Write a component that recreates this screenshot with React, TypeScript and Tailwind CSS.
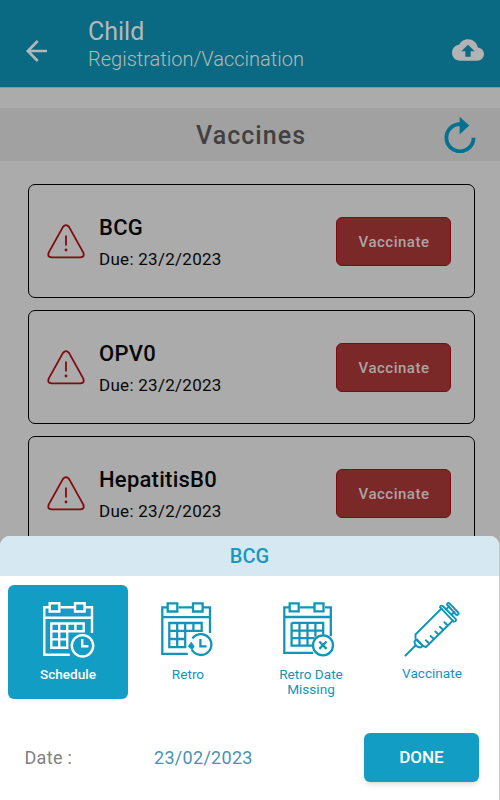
import type { ReactNode } from 'react';

const vaccines = [
  { name: 'BCG', due: '23/2/2023' },
  { name: 'OPV0', due: '23/2/2023' },
  { name: 'HepatitisB0', due: '23/2/2023' },
];

function WarningIcon() {
  return (
    <svg width="38" height="35" viewBox="0 0 38 35" fill="none" stroke="#82090e" strokeWidth="1.8" strokeLinecap="round">
      <path d="M16 2.9Q19 -.8 22 2.9L36.2 28.4Q38 33.2 33.5 33.3H4.5Q0 33.2 1.8 28.4Z" strokeLinejoin="round" />
      <path d="M19 11.5v10" strokeLinecap="butt" />
      <circle cx="19" cy="26" r="1.4" fill="#82090e" stroke="none" />
    </svg>
  );
}

function ScheduleIcon() {
  return (
    <svg width="52" height="56" viewBox="0 0 52 56" fill="none" stroke="currentColor" strokeWidth="2.4">
      <path d="M6 5.3H1.3v47.4h25.5M17.5 5.3H31M42 5.3h7V31M1.3 15.7H49" />
      <path d="M6.7 1.3h9.6v8.2H6.7zM32 1.3h9.6v8.2H32z" />
      <path d="M8.3 21.5h32.4v7.8H24.2v16.4H8.3zM8.3 29.3h16M8.3 37.4h16M16.2 21.5v24.2M24.2 21.5v8M32.4 21.5v8" />
      <circle cx="39.5" cy="43.8" r="10.7" />
      <path d="M39.2 37v7.3h6.2" />
    </svg>
  );
}

function RetroIcon() {
  return (
    <svg width="52" height="56" viewBox="0 0 52 56" fill="none" stroke="currentColor" strokeWidth="2.3">
      <path d="M6 5.3H1.3v46.6h25.5M17.5 5.3H31M42 5.3h7V31M1.3 15.2H49" />
      <path d="M6.7 1.3h9.6v8.2H6.7zM32 1.3h9.6v8.2H32z" />
      <path d="M8.3 21h32.4v7.8H24.2v16.4H8.3zM8.3 28.8h16M8.3 37h16M16.2 21v24.2M24.2 21v8M32.4 21v8" />
      <path d="M31.5 36.5A10.4 10.4 0 1 1 30.8 47.5" />
      <path d="M30.3 40.2l2.9 4.2-2 3.2-4-3.2z" fill="currentColor" strokeWidth=".8" />
      <path d="M39.4 37v7.3h6.2" />
    </svg>
  );
}

function MissingIcon() {
  return (
    <svg width="52" height="56" viewBox="0 0 52 56" fill="none" stroke="currentColor" strokeWidth="2.3">
      <path d="M6 5.3H1.3v45.6h29M16.7 5.3H31M42 5.3h5.8v29M1.3 15H48" />
      <path d="M6.7 1.3h9v8h-9zM31.5 1.3h9v8h-9z" />
      <path d="M8.6 20.8h31.6v12M30 43.6H8.6V20.8M8.6 28.6h31.6M8.6 36.2h23M16.5 20.8v22.8M24.5 20.8v22.8M32.4 20.8v14" />
      <circle cx="40" cy="43.3" r="10" />
      <path d="M36.3 39.5l7.2 7.4M43.5 39.5l-7.2 7.4" />
    </svg>
  );
}

function SyringeIcon() {
  return (
    <svg width="56" height="56" viewBox="0 0 56 56" fill="none" stroke="currentColor" strokeWidth="1.9" strokeLinejoin="round" strokeLinecap="round">
      <path d="M1.5 53.5L11.5 43.5" />
      <path d="M13 37.5l6 6.5-2.5 1.5-3.5-1-2-2.5-.6-2.8z" />
      <path d="M37.5 6.5L11.5 32.5v4.5l7.5 7 3 1L49 18.5" />
      <path d="M21.8 38.3l3.2 3M26.6 34l3.2 3M31.3 29.5l3.2 3M35.8 24.8l3.2 3M40.4 20.2l3.2 3" />
      <path d="M36 5.2q.3-2.3 2.8-1.2L52 17.3q.2 2.5-2.4 2.3z" />
      <path d="M43 2.5q.3-2.2 2.6-1.2l9 9.7q.2 2.2-2.3 1.9z" />
      <path d="M42 7.4l3.2-2.9M47.5 12.7l2.9-2.7" />
    </svg>
  );
}

function Option({ icon, label, className }: { icon: ReactNode; label: ReactNode; className: string }) {
  return (
    <button className={`flex h-[114px] flex-col items-center rounded-md pt-[17px] text-[13.6px] leading-[15px] ${className}`}>
      {icon}
      <span className="mt-[9px]">{label}</span>
    </button>
  );
}

export default function App() {
  return (
    <div className="relative h-[800px] w-[500px] overflow-hidden bg-[#ababab] font-[Roboto,sans-serif]">
      <header className="flex h-[88px] items-start border-b border-[#8f9496] bg-[#0b6a83] text-[#b3b8ba]">
        <svg className="mt-[40px] ml-[26px]" width="22" height="22" viewBox="0 0 22 22" fill="none" stroke="currentColor" strokeWidth="2.6">
          <path d="M21 11H2M11.7 1L1.8 11l9.9 10" />
        </svg>
        <div className="mt-[17px] ml-[40px] flex-1">
          <h1 className="text-[25px] leading-[29px]">Child</h1>
          <p className="text-[20px] leading-[26px] font-light">Registration/Vaccination</p>
        </div>
        <svg className="mt-[34px] mr-[16px]" width="32" height="32" viewBox="0 0 24 24" fill="#b3b3b3">
          <path d="M19.35 10.04C18.67 6.59 15.64 4 12 4 9.11 4 6.6 5.64 5.35 8.04 2.34 8.36 0 10.91 0 14c0 3.31 2.69 6 6 6h13c2.76 0 5-2.24 5-5 0-2.64-2.05-4.78-4.65-4.96zM14 13v4h-4v-4H7l5-5 5 5h-3z" />
        </svg>
      </header>

      <div className="mt-[20px] flex h-[53px] items-center bg-[#a1a1a1] pr-[24px] pl-[196px]">
        <h2 className="flex-1 pt-[3px] text-[25px] leading-[36px] font-medium tracking-[1.05px] text-[#414141]">Vaccines</h2>
        <svg width="33" height="37" viewBox="0 0 33 37" fill="none" stroke="#05718e" strokeWidth="3.8">
          <path d="M17 8.2A13.6 13.6 0 1 0 30.6 21.8" />
          <path d="M16.6 .8v17.6L26.2 9.6z" fill="#05718e" stroke="none" />
        </svg>
      </div>

      <main className="mt-[23px] flex flex-col gap-3 pr-[25px] pl-[28px]">
        {vaccines.map((v) => (
          <section key={v.name} className="flex h-[114px] items-center rounded-[7px] border border-black pr-[23px] pl-[18px]">
            <WarningIcon />
            <div className="ml-[14px] flex-1 pt-[4px] text-[#070707]">
              <h3 className="text-[22px] leading-[28px] font-medium tracking-[0.25px]">{v.name}</h3>
              <p className="mt-[4px] text-[17px] leading-[26px] tracking-[0.28px]">Due: {v.due}</p>
            </div>
            <button className="h-[49px] w-[115px] rounded-md border border-[#7d0b10] bg-[#7b2829] pt-[2px] pl-px text-[15px] font-medium tracking-[0.5px] text-[#aea3a3]">
              Vaccinate
            </button>
          </section>
        ))}
      </main>

      <div className="absolute inset-x-0 bottom-0 h-[264px] overflow-hidden rounded-t-[10px] border-r border-[#c9c9c9] bg-white">
        <h2 className="flex h-[40px] items-center justify-center bg-[#d6e9f3] text-[20px] font-medium text-[#149ac0]">BCG</h2>
        <div className="mt-[9px] flex pl-2 text-[#1394ba]">
          <Option icon={<span className="pl-px"><ScheduleIcon /></span>} label="Schedule" className="w-[120px] bg-[#129dc4] font-medium text-white" />
          <Option icon={<span className="pr-[3px]"><RetroIcon /></span>} label="Retro" className="w-[120px]" />
          <Option icon={<span className="pr-[4px]"><MissingIcon /></span>} label={<>Retro Date<br />Missing</>} className="w-[126px]" />
          <Option icon={<span className="-mb-px"><SyringeIcon /></span>} label="Vaccinate" className="w-[116px]" />
        </div>
        <div className="mt-[34px] flex h-[49px] items-center pr-[20px] pl-[24.5px] text-[18px] tracking-[0.3px]">
          <span className="w-[129.5px] text-[#818181]">Date :</span>
          <span className="flex-1 text-[#4b93af]">23/02/2023</span>
          <button className="h-[49px] w-[115px] rounded-md bg-[#129dc4] text-[17px] font-medium tracking-normal text-white shadow-md">DONE</button>
        </div>
      </div>
    </div>
  );
}
